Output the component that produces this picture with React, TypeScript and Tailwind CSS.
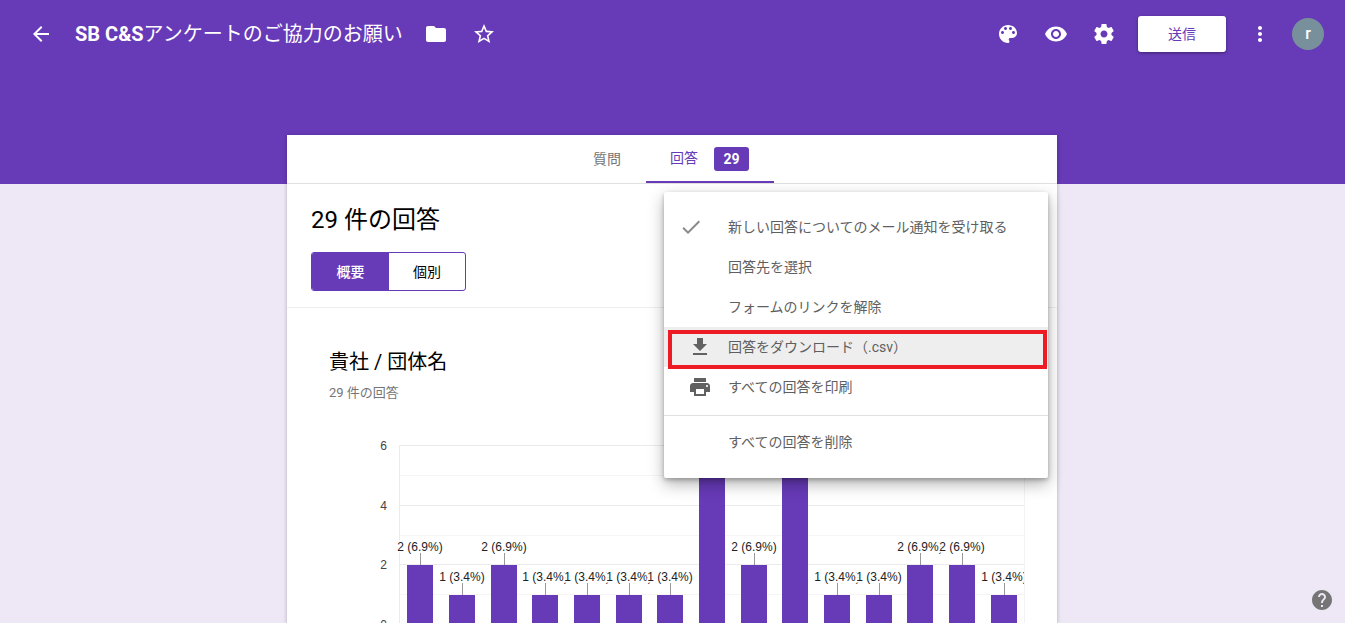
const ICONS = {
  back: "M20 11H7.83l5.59-5.59L12 4l-8 8 8 8 1.41-1.41L7.83 13H20v-2z",
  folder: "M10 4H4c-1.1 0-2 .9-2 2v12c0 1.1.9 2 2 2h16c1.1 0 2-.9 2-2V8c0-1.1-.9-2-2-2h-8l-2-2z",
  star: "M22 9.24l-7.19-.62L12 2 9.19 8.63 2 9.24l5.46 4.73L5.82 21 12 17.27 18.18 21l-1.63-7.03L22 9.24zM12 15.4l-3.76 2.27 1-4.28-3.32-2.88 4.38-.38L12 6.1l1.71 4.04 4.38.38-3.32 2.88 1 4.28L12 15.4z",
  palette:
    "M12 3c-4.97 0-9 4.03-9 9s4.03 9 9 9c.83 0 1.5-.67 1.5-1.5 0-.39-.15-.74-.39-1.01-.23-.26-.38-.61-.38-.99 0-.83.67-1.5 1.5-1.5H16c2.76 0 5-2.24 5-5 0-4.42-4.03-8-9-8zm-5.5 9c-.83 0-1.5-.67-1.5-1.5S5.67 9 6.5 9 8 9.67 8 10.5 7.33 12 6.5 12zm3-4C8.67 8 8 7.33 8 6.5S8.67 5 9.5 5s1.5.67 1.5 1.5S10.33 8 9.5 8zm5 0c-.83 0-1.5-.67-1.5-1.5S13.67 5 14.5 5s1.5.67 1.5 1.5S15.33 8 14.5 8zm3 4c-.83 0-1.5-.67-1.5-1.5S16.67 9 17.5 9s1.5.67 1.5 1.5-.67 1.5-1.5 1.5z",
  eye: "M12 4.5C7 4.5 2.73 7.61 1 12c1.73 4.39 6 7.5 11 7.5s9.27-3.11 11-7.5c-1.73-4.39-6-7.5-11-7.5zM12 17c-2.76 0-5-2.24-5-5s2.24-5 5-5 5 2.24 5 5-2.24 5-5 5zm0-8c-1.66 0-3 1.34-3 3s1.34 3 3 3 3-1.34 3-3-1.34-3-3-3z",
  settings:
    "M19.43 12.98c.04-.32.07-.64.07-.98s-.03-.66-.07-.98l2.11-1.65c.19-.15.24-.42.12-.64l-2-3.46c-.12-.22-.39-.3-.61-.22l-2.49 1c-.52-.4-1.08-.73-1.69-.98l-.38-2.65C14.46 2.18 14.25 2 14 2h-4c-.25 0-.46.18-.49.42l-.38 2.65c-.61.25-1.17.59-1.69.98l-2.49-1c-.23-.09-.49 0-.61.22l-2 3.46c-.13.22-.07.49.12.64l2.11 1.65c-.04.32-.07.65-.07.98s.03.66.07.98l-2.11 1.65c-.19.15-.24.42-.12.64l2 3.46c.12.22.39.3.61.22l2.49-1c.52.4 1.08.73 1.69.98l.38 2.65c.03.24.24.42.49.42h4c.25 0 .46-.18.49-.42l.38-2.65c.61-.25 1.17-.59 1.69-.98l2.49 1c.23.09.49 0 .61-.22l2-3.46c.12-.22.07-.49-.12-.64l-2.11-1.65zM12 15.5c-1.93 0-3.5-1.57-3.5-3.5s1.57-3.5 3.5-3.5 3.5 1.57 3.5 3.5-1.57 3.5-3.5 3.5z",
  more: "M12 8c1.1 0 2-.9 2-2s-.9-2-2-2-2 .9-2 2 .9 2 2 2zm0 2c-1.1 0-2 .9-2 2s.9 2 2 2 2-.9 2-2-.9-2-2-2zm0 6c-1.1 0-2 .9-2 2s.9 2 2 2 2-.9 2-2-.9-2-2-2z",
  check: "M9 16.2L4.8 12l-1.4 1.4L9 19 21 7l-1.4-1.4L9 16.2z",
  download: "M19 9h-4V3H9v6H5l7 7 7-7zM5 18v2h14v-2H5z",
  print:
    "M19 8H5c-1.66 0-3 1.34-3 3v6h4v4h12v-4h4v-6c0-1.66-1.34-3-3-3zm-3 11H8v-5h8v5zm3-7c-.55 0-1-.45-1-1s.45-1 1-1 1 .45 1 1-.45 1-1 1zm-1-9H6v4h12V3z",
  help: "M12 2C6.48 2 2 6.48 2 12s4.48 10 10 10 10-4.48 10-10S17.52 2 12 2zm1 17h-2v-2h2v2zm2.07-7.75l-.9.92C13.45 12.9 13 13.5 13 15h-2v-.5c0-1.1.45-2.1 1.17-2.83l1.24-1.26c.37-.36.59-.86.59-1.41 0-1.1-.9-2-2-2s-2 .9-2 2H8c0-2.21 1.79-4 4-4s4 1.79 4 4c0 .88-.36 1.68-.93 2.25z",
};

function Icon({ name, className }: { name: keyof typeof ICONS; className?: string }) {
  return (
    <svg viewBox="0 0 24 24" className={`h-6 w-6 fill-current ${className ?? ""}`}>
      <path d={ICONS[name]} />
    </svg>
  );
}

function HeaderIcon({ name }: { name: keyof typeof ICONS }) {
  return (
    <div className="flex h-12 w-12 shrink-0 items-center justify-center text-white">
      <Icon name={name} />
    </div>
  );
}

const bars = [
  { x: 407, value: 2 },
  { x: 449, value: 1 },
  { x: 491, value: 2 },
  { x: 532, value: 1 },
  { x: 574, value: 1 },
  { x: 616, value: 1 },
  { x: 657, value: 1 },
  { x: 699, value: 5 },
  { x: 741, value: 2 },
  { x: 782, value: 6 },
  { x: 824, value: 1 },
  { x: 866, value: 1 },
  { x: 907, value: 2 },
  { x: 949, value: 2 },
  { x: 991, value: 1 },
];

const gridLines = [445, 475, 505, 535, 564, 594];
const axisLabels = [
  { y: 450, label: "6" },
  { y: 510, label: "4" },
  { y: 569, label: "2" },
  { y: 629, label: "0" },
];

function Chart() {
  return (
    <svg
      viewBox="329 435 700 188"
      className="h-[188px] w-[700px] font-['Liberation_Sans',Arial,sans-serif]"
    >
      <defs>
        <clipPath id="plot">
          <rect x="329" y="435" width="695" height="188" />
        </clipPath>
      </defs>
      {gridLines.map((y, i) => (
        <line key={y} x1="399" x2="1024" y1={y + 0.5} y2={y + 0.5} stroke={i % 2 ? "#f5f5f5" : "#ebebeb"} />
      ))}
      <line x1="399.5" x2="399.5" y1="445" y2="623" stroke="#ebebeb" />
      <line x1="1024.5" x2="1024.5" y1="445" y2="623" stroke="#f3f3f3" />
      {axisLabels.map((a) => (
        <text key={a.label} x="387" y={a.y} textAnchor="end" fontSize="12" fill="#444444">
          {a.label}
        </text>
      ))}
      <g clipPath="url(#plot)">
        {bars.map((b) => {
          const top = 625 - b.value * 30;
          const small = b.value <= 2;
          return (
            <g key={b.x}>
              <rect x={b.x} y={top} width="26" height={625 - top} fill="#673ab7" />
              {small && (
                <>
                  <text
                    x={b.x + 13}
                    y={top - 14}
                    textAnchor="middle"
                    fontSize="12"
                    fill="#222222"
                    stroke="#ffffff"
                    strokeWidth="3"
                    paintOrder="stroke"
                  >
                    {b.value === 2 ? "2 (6.9%)" : "1 (3.4%)"}
                  </text>
                  <line x1={b.x + 13.5} x2={b.x + 13.5} y1={top - 12} y2={top} stroke="#999999" />
                </>
              )}
            </g>
          );
        })}
      </g>
    </svg>
  );
}

function MenuItem({
  label,
  icon,
  active,
}: {
  label: string;
  icon?: React.ReactNode;
  active?: boolean;
}) {
  return (
    <div className={`flex h-10 items-center text-sm text-[#5f5f5f] ${active ? "bg-[#eeeeee]" : ""}`}>
      <div className="flex w-16 shrink-0 items-center">{icon}</div>
      <span>{label}</span>
    </div>
  );
}

export default function App() {
  return (
    <div className="relative h-[623px] overflow-hidden bg-[#ede7f6] font-['Roboto','Noto_Sans_CJK_JP',sans-serif]">
      <header className="h-[184px] bg-[#673ab7]">
        <div className="flex h-[68px] items-center pl-[17px] pr-[21px]">
          <HeaderIcon name="back" />
          <div className="ml-[10px] w-[327px] shrink-0 whitespace-nowrap text-xl text-white">
            <span className="font-bold">SB C&amp;S</span>アンケートのご協力のお願い
          </div>
          <div className="ml-[10px] flex">
            <HeaderIcon name="folder" />
            <HeaderIcon name="star" />
          </div>
          <div className="ml-auto flex">
            <HeaderIcon name="palette" />
            <HeaderIcon name="eye" />
            <HeaderIcon name="settings" />
          </div>
          <button className="ml-[10px] h-9 w-[88px] rounded-[3px] bg-white text-sm text-[#673ab7] shadow-[0_1px_3px_rgba(0,0,0,0.4)]">
            送信
          </button>
          <div className="ml-[10px]">
            <HeaderIcon name="more" />
          </div>
          <div className="ml-2 flex h-8 w-8 items-center justify-center rounded-full bg-[#78909c] text-base font-medium text-white">
            r
          </div>
        </div>
      </header>

      <main className="-mt-[49px] ml-[287px] w-[770px] bg-white shadow-[0_1px_4px_rgba(0,0,0,0.25)]">
        <nav className="flex h-[49px] justify-center border-b border-[#e0e0e0] pr-[2px] text-sm">
          <div className="flex h-12 w-[77px] items-center justify-center text-[#757575]">質問</div>
          <div className="flex h-12 w-[128px] items-center justify-center gap-4 border-b-[2px] border-[#673ab7] text-[#673ab7]">
            <span>回答</span>
            <span className="mt-[2px] flex h-6 w-[35px] items-center justify-center rounded-[3px] bg-[#673ab7] font-bold text-white">
              29
            </span>
          </div>
        </nav>

        <section className="h-[124px] border-b border-[#eeeeee] px-6 pt-[20px]">
          <h1 className="text-2xl leading-8 text-black">29 件の回答</h1>
          <div className="mt-[16px] flex h-[39px] w-[155px] overflow-hidden rounded-[3px] border border-[#673ab7] text-sm">
            <div className="flex w-[77px] items-center justify-center bg-[#673ab7] font-medium text-white">
              概要
            </div>
            <div className="flex flex-1 items-center justify-center text-black">個別</div>
          </div>
        </section>

        <section className="pl-[42px] pt-[38px]">
          <h2 className="text-xl leading-8 text-black">貴社 / 団体名</h2>
          <p className="mt-[5px] text-[13px] leading-5 text-[#757575]">29 件の回答</p>
          <div className="mt-[32px]">
            <Chart />
          </div>
        </section>
      </main>

      <div className="absolute left-[664px] top-[192px] h-[286px] w-[384px] rounded-[2px] bg-white pt-[15px] shadow-[0_2px_4px_rgba(0,0,0,0.25),0_6px_16px_rgba(0,0,0,0.3)]">
        <MenuItem label="新しい回答についてのメール通知を受け取る" icon={<Icon name="check" className="ml-[15px] text-[#8a8a8a]" />} />
        <MenuItem label="回答先を選択" />
        <MenuItem label="フォームのリンクを解除" />
        <MenuItem label="回答をダウンロード（.csv）" active icon={<Icon name="download" className="ml-6 text-[#616161]" />} />
        <MenuItem label="すべての回答を印刷" icon={<Icon name="print" className="ml-6 text-[#616161]" />} />
        <div className="mt-2 border-t border-[#e0e0e0] pt-[6px]">
          <MenuItem label="すべての回答を削除" />
        </div>
        <div className="absolute left-[4px] top-[138px] h-[39px] w-[379px] border-[4.5px] border-[#ed1c24]" />
      </div>

      <div className="absolute bottom-[11px] right-[11px] text-[#757575]">
        <Icon name="help" />
      </div>
    </div>
  );
}
